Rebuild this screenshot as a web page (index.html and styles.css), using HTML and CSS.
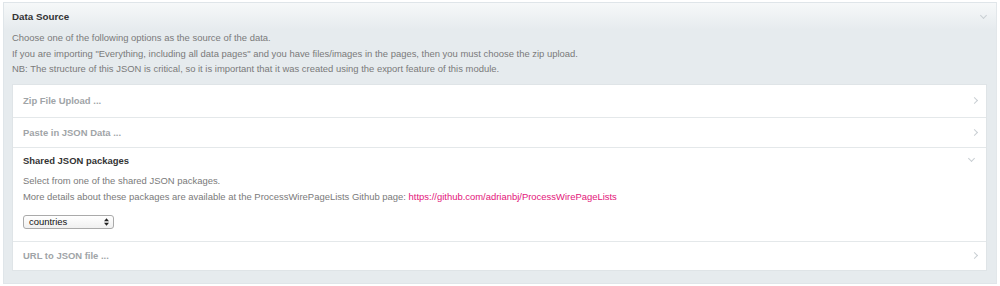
FILE: index.html
```html
<!DOCTYPE html>
<html lang="en">
<head>
  <meta charset="utf-8" />
  <title>Data Source</title>
  <link rel="stylesheet" href="styles.css">
</head>
<body>
  <div class="field">
    <div class="field_head">
      <span class="field_title">Data Source</span>
      <span class="chev chev_down"></span>
    </div>
    <div class="field_body">
      <p class="note">Choose one of the following options as the source of the data.</p>
      <p class="note">If you are importing "Everything, including all data pages" and you have files/images in the pages, then you must choose the zip upload.</p>
      <p class="note">NB: The structure of this JSON is critical, so it is important that it was created using the export feature of this module.</p>

      <div class="panel">
        <div class="row row_closed">
          <span class="row_title">Zip File Upload ...</span>
          <span class="chev chev_right"></span>
        </div>
        <div class="row row_closed row_short">
          <span class="row_title">Paste in JSON Data ...</span>
          <span class="chev chev_right"></span>
        </div>
        <div class="row row_open">
          <div class="row_head">
            <span class="row_title">Shared JSON packages</span>
            <span class="chev chev_down"></span>
          </div>
          <p class="note">Select from one of the shared JSON packages.</p>
          <p class="note">More details about these packages are available at the ProcessWirePageLists Github page: <a href="#">https://github.com/adrianbj/ProcessWirePageLists</a></p>
          <div class="pick">
            <span>countries</span>
            <svg width="5" height="8" viewBox="0 0 6 9"><path d="M3 0 L6 3.5 H0 Z M3 9 L6 5.5 H0 Z" fill="#222"/></svg>
          </div>
        </div>
        <div class="row row_closed row_last">
          <span class="row_title">URL to JSON file ...</span>
          <span class="chev chev_right"></span>
        </div>
      </div>
    </div>
  </div>
</body>
</html>
```

FILE: styles.css
```css
body {
  margin: 0;
  padding: 2px 3px 0 3px;
  font-family: "Liberation Sans", Arial, sans-serif;
  font-size: 9.45px;
  background-color: #ffffff;
}

.field {
  border: 1px solid #dfe5e9;
  border-right-color: #e2e7ea;
  background-color: #e6ebee;
  height: 282px;
  box-sizing: border-box;
}

.field_head {
  display: flex;
  justify-content: space-between;
  align-items: center;
  height: 27px;
  padding: 0 8px 0 8px;
  background: linear-gradient(#f6f8f9, #e6ebee);
}

.field_title {
  font-weight: bold;
  color: #333333;
  font-size: 9.8px;
}

.field_body {
  padding: 0 9px 0 8px;
}

.note {
  margin: 0;
  line-height: 15.5px;
  color: #7a7a7a;
}

.panel {
  margin-top: 7px;
  background-color: #ffffff;
  border: 1px solid #dfe4e7;
}

.row {
  border-top: 1px solid #e4e8ea;
  padding: 0 10px;
}

.row:first-child {
  border-top: 0;
}

.row_closed {
  display: flex;
  justify-content: space-between;
  align-items: center;
  height: 32px;
}

.row_short {
  height: 29px;
}

.row_last {
  height: 28px;
}

.row_title {
  font-weight: bold;
  color: #333333;
}

.row_closed .row_title {
  color: #a0a4a7;
}

.row_head {
  display: flex;
  justify-content: space-between;
  align-items: center;
  height: 25px;
}

.row_open {
  padding-bottom: 12px;
}

.row_open .note {
  line-height: 16px;
}

.row_open a {
  color: #e3157a;
  text-decoration: none;
}

.pick {
  display: flex;
  justify-content: space-between;
  align-items: center;
  margin-top: 10px;
  width: 80px;
  height: 12px;
  padding: 0 4px 0 5px;
  box-sizing: content-box;
  border: 1px solid #aaaaaa;
  border-radius: 3px;
  background: linear-gradient(#ffffff, #f0f0f0);
  color: #111111;
}

.chev {
  width: 4px;
  height: 4px;
  border-right: 1px solid #c9cfd3;
  border-bottom: 1px solid #c9cfd3;
}

.chev_right {
  transform: rotate(-45deg);
  margin-right: -1px;
}

.chev_down {
  transform: rotate(45deg);
  margin-right: 2px;
  margin-top: -3px;
}
```
